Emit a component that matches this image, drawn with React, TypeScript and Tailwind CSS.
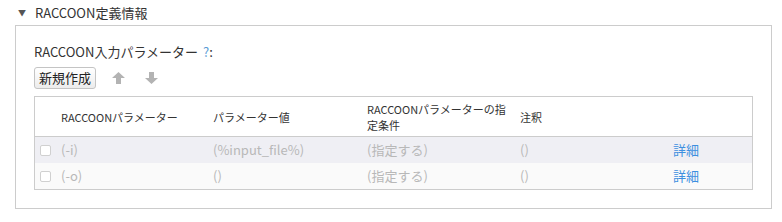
const rows = [
  { name: '(-i)', value: '(%input_file%)', cond: '(指定する)', note: '()' },
  { name: '(-o)', value: '()', cond: '(指定する)', note: '()' },
];

// 太い矢印（上向き）。下向きは回転させて使う
function BlockArrow({ down }: { down?: boolean }) {
  return (
    <svg
      width="13"
      height="12"
      viewBox="0 0 13 12"
      className={down ? 'rotate-180' : ''}
      fill="#b3b3b3"
    >
      <path d="M6.5 0 L13 6 L9 6 L9 12 L4 12 L4 6 L0 6 Z" />
    </svg>
  );
}

export default function App() {
  return (
    <div
      className="h-[222px] w-[782px] bg-white text-[12px] text-[#333]"
      style={{ fontFamily: '"Noto Sans CJK JP", "Noto Sans", sans-serif' }}
    >
      {/* セクション見出し */}
      <div className="flex h-[25px] items-center pl-[18px]">
        <span className="text-[8px] text-[#555]">▼</span>
        <span className="ml-[9px] text-[13px] text-[#333]">RACCOON定義情報</span>
      </div>

      <div className="ml-[15px] h-[184px] w-[757px] border border-[#ccc] px-[18px]">
        <div className="mt-[16px] flex h-[20px] items-center text-[13px]">
          RACCOON入力パラメーター <span className="ml-[5px] text-[#5b9bd5]">?</span>:
        </div>

        <div className="mt-[4px] flex h-[23px] items-center">
          <button className="h-[22px] rounded-[3px] border border-[#c4c4c4] bg-gradient-to-b from-white to-[#ececec] px-[4px] text-[13px] text-[#222]">
            新規作成
          </button>
          <span className="ml-[16px] flex">
            <BlockArrow />
          </span>
          <span className="ml-[20px] flex">
            <BlockArrow down />
          </span>
        </div>

        <div className="mt-[7px] w-[719px] border border-[#ccc]">
          <div className="grid h-[40px] grid-cols-[26px_152px_154px_153px_153px_1fr] items-center border-b border-[#ccc] text-[11px] leading-[16px]">
            <div />
            <div>RACCOONパラメーター</div>
            <div>パラメーター値</div>
            <div className="pr-[10px]">RACCOONパラメーターの指定条件</div>
            <div>注釈</div>
            <div />
          </div>
          {rows.map((r, i) => (
            <div
              key={r.name}
              className={`grid h-[26px] grid-cols-[26px_152px_154px_153px_153px_1fr] items-center text-[13px] text-[#b8b8b8] ${
                i === 0 ? 'bg-[#efeff4]' : 'bg-[#fafafa]'
              }`}
            >
              <div className="pl-[5px]">
                <div className="h-[11px] w-[11px] rounded-[2px] border border-[#d0d0d0] bg-white" />
              </div>
              <div>{r.name}</div>
              <div>{r.value}</div>
              <div>{r.cond}</div>
              <div>{r.note}</div>
              <div className="text-[#3d8fe0]">詳細</div>
            </div>
          ))}
        </div>
      </div>
    </div>
  );
}
